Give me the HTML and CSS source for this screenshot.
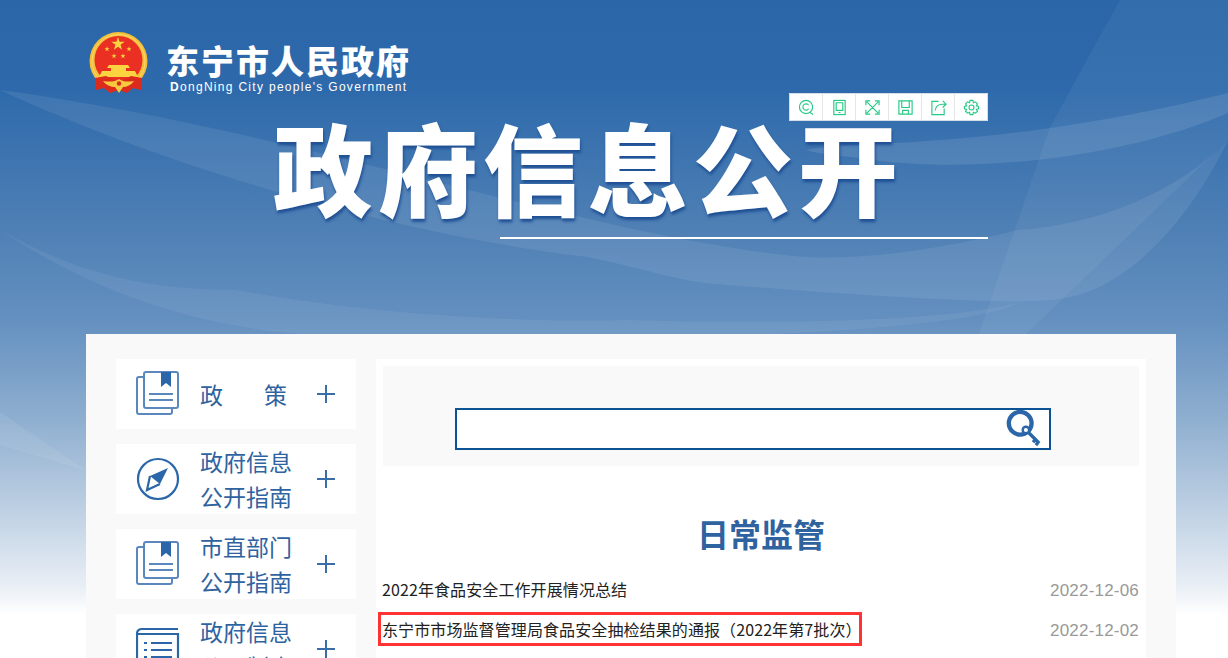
FILE: index.html
```html
<!DOCTYPE html>
<html lang="zh-CN">

<head>
    <meta charset="UTF-8">
    <title>政府信息公开</title>
    <link rel="stylesheet" href="styles.css">
</head>

<body>
    <svg class="swoosh" viewBox="0 0 1228 620" aria-hidden="true">
        <path d="M1120 0L1228 0L1228 140L1026 334L979 334L1050 127Z" fill="#fff" opacity=".05"/>
        <path d="M0 90C150 160 380 232 587 257C640 268 670 278 705 283C850 295 1000 305 1050 300C1135 295 1200 200 1228 140C1180 190 1100 225 1018 230C940 250 860 260 806 257C600 240 300 130 0 90Z" fill="#fff" opacity=".08"/>
        <path d="M0 230C80 275 150 290 235 290C400 320 560 322 626 320C800 325 950 320 1018 303C950 340 500 345 300 334C190 325 90 290 0 230Z" fill="#fff" opacity=".06"/>
        <path d="M806 150C860 140 1000 150 1228 93L1228 113C1120 160 960 175 860 158C840 156 820 154 806 150Z" fill="#fff" opacity=".1"/>
        <path d="M0 412L85 470L0 445Z" fill="#fff" opacity=".07"/>
    </svg>

    <header class="banner">
        <div class="site-brand">
            <svg class="emblem" viewBox="0 0 59 62">
                <defs>
                    <polygon id="star" points="0,-1 .225,-.309 .951,-.309 .363,.118 .588,.809 0,.382 -.588,.809 -.363,.118 -.951,-.309 -.225,-.309"/>
                </defs>
                <circle cx="29.500" cy="29" r="29" fill="#f4bf3a"/>
                <circle cx="29.500" cy="29" r="26.500" fill="none" stroke="#fbd96a" stroke-width="1"/>
                <circle cx="29.500" cy="28" r="24" fill="#ea3022"/>
                <g fill="#fbd43f">
                    <use href="#star" transform="translate(29 12) scale(7)"/>
                    <use href="#star" transform="translate(18 17) scale(2.800)"/>
                    <use href="#star" transform="translate(40 17) scale(2.800)"/>
                    <use href="#star" transform="translate(25 24) scale(2.800)"/>
                    <use href="#star" transform="translate(34 24) scale(2.800)"/>
                    <path d="M20 33L39 33L41 36L37 36L37 39L46 39L49 45L10 45L13 39L22 39L22 36L18 36Z"/>
                </g>
                <path d="M6 46L17 44L30 50L42 44L53 46L52 58L44 56L38 61L30 58L21 61L15 56L7 58Z" fill="#dc2a1c"/>
                <path d="M14 49C22 50 25 50 30 47C35 50 38 50 45 49C42 53 38 55 34 55L30 61L26 55C22 55 17 53 14 49Z" fill="#f7c93e"/>
                <circle cx="30" cy="51.500" r="2.200" fill="#dc2a1c"/>
            </svg>
            <div class="brand-text">
                <div class="brand-name">东宁市人民政府</div>
                <div class="brand-sub"><b>D</b>ongNing City people's Government</div>
            </div>
        </div>

        <h1 class="page-title">政府信息公开</h1>
        <div class="title-rule"></div>

        <div class="toolbar">
            <span class="tool"><svg viewBox="0 0 18 18"><circle cx="8.500" cy="8.500" r="7"/><path d="M11.200 6.600A3.300 3.300 0 1 0 11.200 10.400M12.500 14L16 16.500"/></svg></span>
            <span class="tool"><svg viewBox="0 0 18 18"><rect x="3" y="1.500" width="12" height="15"/><path d="M5.500 4H12.500V12H5.500ZM8 14.300H10"/></svg></span>
            <span class="tool"><svg viewBox="0 0 18 18"><path d="M3 3L15 15M15 3L3 15M2 6.500V2H6.500M11.500 2H16V6.500M2 11.500V16H6.500M11.500 16H16V11.500"/></svg></span>
            <span class="tool"><svg viewBox="0 0 18 18"><path d="M2 2H16V16H2ZM5 2V9H13V2M6 16V12H12V16"/></svg></span>
            <span class="tool"><svg viewBox="0 0 18 18"><path d="M9 2.500H2V16.500H15V10M5.500 12C6 8 9 5.500 13 5.500H16M13.500 2L17 5.500L13.500 9"/></svg></span>
            <span class="tool"><svg viewBox="0 0 18 18"><path d="M7.500 1.500H10.500L11 4L13.200 3L15.300 5.100L14.200 7.200L16.500 7.800V10.400L14.200 11L15.300 13L13.200 15L11 14L10.500 16.500H7.500L7 14L4.800 15L2.700 13L3.800 11L1.500 10.400V7.800L3.800 7.200L2.700 5.100L4.800 3L7 4Z"/><circle cx="9" cy="9" r="2.600"/></svg></span>
        </div>
    </header>

    <main class="panel">
        <aside class="side-nav">
            <a class="nav-item">
                <svg class="nav-icon" viewBox="0 0 44 46">
                    <path class="soft" d="M7 6H3Q1 6 1 8V41Q1 43 3 43H34Q36 43 36 41V37"/>
                    <rect class="soft" x="8" y="1" width="34" height="36" rx="2"/>
                    <path class="fill" d="M25 1H35V16L30 12L25 16Z"/>
                    <path class="soft" d="M13 23H37M13 29H37"/>
                </svg>
                <span class="nav-label nav-label-wide">政策</span>
                <span class="plus"></span>
            </a>
            <a class="nav-item">
                <svg class="nav-icon" viewBox="0 0 44 46">
                    <circle class="solid" cx="22" cy="23" r="20"/>
                    <path class="fill" d="M32 12L14 20L24 28Z"/>
                    <path class="solid" d="M14 20L11 34L24 28"/>
                </svg>
                <span class="nav-label">政府信息<br>公开指南</span>
                <span class="plus"></span>
            </a>
            <a class="nav-item">
                <svg class="nav-icon" viewBox="0 0 44 46">
                    <path class="soft" d="M7 6H3Q1 6 1 8V41Q1 43 3 43H34Q36 43 36 41V37"/>
                    <rect class="soft" x="8" y="1" width="34" height="36" rx="2"/>
                    <path class="fill" d="M25 1H35V16L30 12L25 16Z"/>
                    <path class="soft" d="M13 23H37M13 29H37"/>
                </svg>
                <span class="nav-label">市直部门<br>公开指南</span>
                <span class="plus"></span>
            </a>
            <a class="nav-item">
                <svg class="nav-icon" viewBox="0 0 44 46">
                    <path class="solid" d="M1 44V8Q1 3 6 3H42M6 8H42V44M1 8H6"/>
                    <path class="solid" d="M8 17H11M15 17H36M8 24H11M15 24H36M8 31H11M15 31H36"/>
                </svg>
                <span class="nav-label">政府信息<br>公开制度</span>
                <span class="plus"></span>
            </a>
        </aside>

        <section class="content">
            <div class="search-area">
                <div class="search-box">
                    <svg class="search-icon" viewBox="0 0 38 40">
                        <circle cx="15" cy="14" r="12" fill="none" stroke="#2a66a8" stroke-width="4.500"/>
                        <circle cx="21" cy="21" r="3.400" fill="#fff" stroke="#2a66a8" stroke-width="2.500"/>
                        <path d="M24 24L35 35M31 31L28.500 34M34 34L31.500 37" fill="none" stroke="#2a66a8" stroke-width="3.500"/>
                    </svg>
                </div>
            </div>

            <h2 class="list-title">日常监管</h2>

            <ul class="doc-list">
                <li class="doc-row">
                    <a class="doc-link">2022年食品安全工作开展情况总结</a>
                    <span class="doc-date">2022-12-06</span>
                </li>
                <li class="doc-row">
                    <a class="doc-link doc-link-marked">东宁市市场监督管理局食品安全抽检结果的通报（2022年第7批次）</a>
                    <span class="doc-date">2022-12-02</span>
                </li>
            </ul>
        </section>
    </main>
</body>

</html>
```

FILE: styles.css
```css
:root {
    --blue-text: #2f639f;
    --blue-icon: #2a66a8;
    --blue-soft: #5a88bc;
    --panel-grey: #f9f9f9;
    --tool-green: #25c985;
}

html,
body {
    height: 658px;
    overflow: hidden;
}

body {
    position: relative;
    margin: 0;
    font-family: "Noto Sans CJK SC", "Liberation Sans", sans-serif;
    color: #222;
    background-color: #fff;
    background-image: linear-gradient(to bottom, #2a66a8 0, #2e6aab 90px, #4f80b5 230px, #6490c0 320px, #8fafd0 420px, #bed0e3 510px, #e8eef5 585px, #fff 615px);
    background-repeat: no-repeat;
    background-size: 100% 620px;
}

.swoosh {
    position: absolute;
    top: 0;
    left: 0;
    width: 1228px;
    height: 620px;
}

.banner {
    position: relative;
    height: 334px;
    box-sizing: border-box;
    padding-top: 32px;
}

.site-brand {
    display: flex;
    padding-left: 89px;
}

.emblem {
    width: 59px;
    height: 62px;
}

.brand-text {
    margin-left: 18px;
    color: #fff;
}

.brand-name {
    font-size: 33px;
    font-weight: 900;
    line-height: 34px;
    letter-spacing: 2px;
    margin-top: 11px;
    white-space: nowrap;
}

.brand-sub {
    font-family: "Liberation Sans", sans-serif;
    font-size: 12px;
    line-height: 14px;
    letter-spacing: 1.300px;
    margin: 3px 0 0 4px;
    white-space: nowrap;
}

.page-title {
    margin: 17px 0 0 273px;
    font-size: 100px;
    font-weight: 900;
    line-height: 110px;
    letter-spacing: 5px;
    color: #fff;
    white-space: nowrap;
    text-shadow: 1px 3px 3px #1f4f94;
}

.title-rule {
    width: 488px;
    height: 2px;
    margin: 16px 0 0 500px;
    background-color: #fff;
}

.toolbar {
    position: absolute;
    top: 93px;
    left: 789px;
    display: flex;
    width: 199px;
    box-sizing: border-box;
    background-color: #fff;
    border: 1px solid #d6dee6;
}

.tool {
    display: flex;
    flex: 1;
    align-items: center;
    justify-content: center;
    height: 26px;
    border-left: 1px solid #e6e6e6;
}

.tool:first-child {
    border-left: 0;
}

.tool svg {
    width: 17px;
    height: 17px;
    fill: none;
    stroke: var(--tool-green);
    stroke-width: 1.200;
}

.panel {
    position: relative;
    display: flex;
    gap: 20px;
    width: 1030px;
    padding: 25px 30px;
    margin-left: 86px;
    background-color: var(--panel-grey);
}

.side-nav {
    display: flex;
    flex-direction: column;
    gap: 15px;
    width: 240px;
}

.nav-item {
    display: flex;
    align-items: center;
    height: 70px;
    padding-left: 20px;
    box-sizing: border-box;
    background-color: #fff;
}

.nav-icon {
    flex: none;
    width: 44px;
    height: 46px;
    fill: none;
}

.nav-icon .soft {
    fill: none;
    stroke: var(--blue-soft);
    stroke-width: 2;
}

.nav-icon .solid {
    fill: none;
    stroke: var(--blue-icon);
    stroke-width: 2.200;
}

.nav-icon .fill {
    fill: var(--blue-icon);
}

.nav-label {
    width: 117px;
    margin-left: 20px;
    font-size: 23px;
    line-height: 35px;
    color: var(--blue-text);
    white-space: nowrap;
}

.nav-label-wide {
    letter-spacing: 41px;
}

.plus {
    width: 18px;
    height: 18px;
    background: linear-gradient(#3a6ea8, #3a6ea8) center / 18px 2px no-repeat, linear-gradient(#3a6ea8, #3a6ea8) center / 2px 18px no-repeat;
}

.content {
    width: 770px;
    padding: 7px;
    box-sizing: border-box;
    background-color: #fff;
}

.search-area {
    height: 100px;
    padding: 42px 0 0 72px;
    box-sizing: border-box;
    background-color: var(--panel-grey);
}

.search-box {
    display: flex;
    align-items: center;
    justify-content: flex-end;
    width: 596px;
    height: 42px;
    padding-right: 6px;
    box-sizing: border-box;
    background-color: #fff;
    border: 2px solid #0b5394;
}

.search-icon {
    width: 38px;
    height: 38px;
}

.list-title {
    margin: 45px 0 0;
    font-size: 32px;
    font-weight: 700;
    line-height: 44px;
    text-align: center;
    color: var(--blue-text);
}

.doc-list {
    margin: 14px 0 0 -1px;
    padding: 0;
    list-style: none;
}

.doc-row {
    display: flex;
    align-items: center;
    justify-content: space-between;
    height: 40px;
    font-size: 16px;
    letter-spacing: .1px;
}

.doc-link-marked {
    display: inline-block;
    width: 484px;
    box-sizing: border-box;
    margin-left: -4px;
    padding-left: 1px;
    line-height: 28px;
    white-space: nowrap;
    border: 3px solid #f33;
}

.doc-date {
    margin-top: 4px;
    font-family: "Liberation Sans", sans-serif;
    font-size: 17px;
    letter-spacing: .2px;
    color: #999;
}
```
